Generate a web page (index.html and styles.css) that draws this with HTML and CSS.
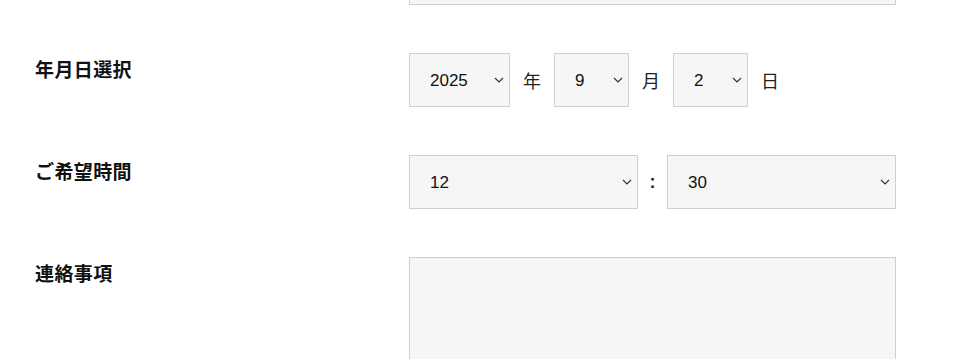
FILE: index.html
```html
<!DOCTYPE html>
<html lang="ja">
<head>
<meta charset="utf-8">
<title>フォーム</title>
<link rel="stylesheet" href="styles.css">
</head>
<body>
<form class="form">
  <div class="label"></div>
  <div class="field"><input class="text-input" type="text"></div>

  <div class="label">年月日選択</div>
  <div class="field date">
    <span class="sel sel-year">
      <select><option>2025</option></select>
      <svg class="chev" width="10" height="6" viewBox="0 0 10 6"><path d="M1 1 L5 5 L9 1" fill="none" stroke="#333" stroke-width="1.2"/></svg>
    </span>
    <span class="unit">年</span>
    <span class="sel sel-small">
      <select><option>9</option></select>
      <svg class="chev" width="10" height="6" viewBox="0 0 10 6"><path d="M1 1 L5 5 L9 1" fill="none" stroke="#333" stroke-width="1.2"/></svg>
    </span>
    <span class="unit">月</span>
    <span class="sel sel-small">
      <select><option>2</option></select>
      <svg class="chev" width="10" height="6" viewBox="0 0 10 6"><path d="M1 1 L5 5 L9 1" fill="none" stroke="#333" stroke-width="1.2"/></svg>
    </span>
    <span class="unit">日</span>
  </div>

  <div class="label">ご希望時間</div>
  <div class="field time">
    <span class="sel">
      <select><option>12</option></select>
      <svg class="chev" width="10" height="6" viewBox="0 0 10 6"><path d="M1 1 L5 5 L9 1" fill="none" stroke="#333" stroke-width="1.2"/></svg>
    </span>
    <span class="colon">:</span>
    <span class="sel">
      <select><option>30</option></select>
      <svg class="chev" width="10" height="6" viewBox="0 0 10 6"><path d="M1 1 L5 5 L9 1" fill="none" stroke="#333" stroke-width="1.2"/></svg>
    </span>
  </div>

  <div class="label">連絡事項</div>
  <div class="field"><textarea class="textarea"></textarea></div>
</form>
</body>
</html>
```
FILE: styles.css
```css
* { box-sizing: border-box; }
html, body { margin: 0; padding: 0; background: #fff; }
body {
  font-family: "Noto Sans CJK JP", "Liberation Sans", sans-serif;
  color: #111;
  overflow: hidden;
}
.form {
  display: grid;
  grid-template-columns: 374px 487px;
  row-gap: 48px;
  padding-left: 35px;
  margin-top: -49px;
}
.label {
  font-size: 19px;
  font-weight: 700;
  line-height: 1;
  padding-top: 6px;
  letter-spacing: 0.02em;
}
.text-input {
  display: block;
  width: 100%;
  height: 54px;
  border: 1px solid #cfcfcf;
  background: #f6f6f6;
  margin: 0;
}
.date {
  display: flex;
  align-items: center;
  gap: 13px;
}
.time {
  display: grid;
  grid-template-columns: 1fr 29px 1fr;
  align-items: center;
}
.sel {
  position: relative;
  display: block;
}
.sel-year { width: 101px; }
.sel-small { width: 75px; }
.sel select {
  appearance: none;
  -webkit-appearance: none;
  display: block;
  width: 100%;
  height: 54px;
  margin: 0;
  border: 1px solid #cfcfcf;
  border-radius: 0;
  background: #f6f6f6;
  font-family: "Liberation Sans", Arial, sans-serif;
  font-size: 17px;
  color: #111;
  padding: 0 0 0 20px;
  outline: none;
}
.chev {
  position: absolute;
  right: 6px;
  top: 50%;
  margin-top: -3px;
  pointer-events: none;
}
.unit {
  font-size: 18px;
  line-height: 1;
  color: #222;
  width: 18px;
}
.colon {
  font-family: "Liberation Sans", Arial, sans-serif;
  font-size: 18px;
  font-weight: 700;
  text-align: center;
  color: #222;
}
.textarea {
  display: block;
  width: 100%;
  height: 160px;
  margin: 0;
  border: 1px solid #cfcfcf;
  border-radius: 0;
  background: #f6f6f6;
  resize: none;
}
```
